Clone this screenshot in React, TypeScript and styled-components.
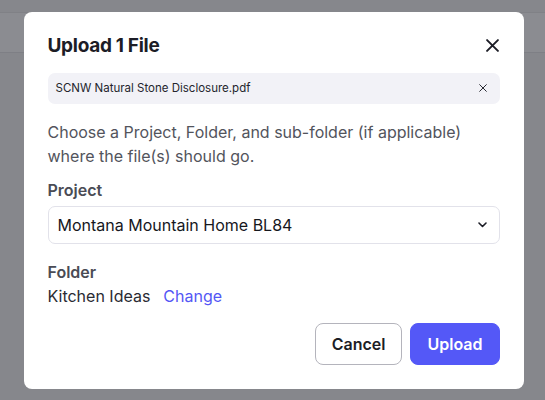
import React from "react";
import styled, { createGlobalStyle } from "styled-components";

const GlobalStyle = createGlobalStyle`
  html, body {
    margin: 0;
    padding: 0;
  }
  body {
    font-family: Inter, "Noto Sans", sans-serif;
    -webkit-font-smoothing: antialiased;
  }
  * { box-sizing: border-box; }
`;

const Page = styled.div`
  position: relative;
  width: 545px;
  height: 400px;
  background: #86878c;
  overflow: hidden;
`;

const HeaderUnder = styled.div`
  margin-top: 12px;
  height: 41px;
  border-top: 1px solid #808186;
  border-bottom: 1px solid #7e7f85;
  background: #8b8c91;
`;

const Overlay = styled.div`
  position: absolute;
  inset: 0;
  display: flex;
  align-items: center;
  justify-content: center;
  padding-left: 2px;
`;

const Dialog = styled.div`
  width: 500px;
  background: #ffffff;
  border-radius: 8px;
  padding: 24px;
  display: flex;
  flex-direction: column;
`;

const TitleRow = styled.div`
  display: flex;
  align-items: center;
  justify-content: space-between;
  height: 20px;
`;

const Title = styled.h2`
  margin: 0;
  font-size: 19px;
  line-height: 20px;
  font-weight: 700;
  letter-spacing: -0.3px;
  color: #1c1d26;
`;

const IconButton = styled.button<{ size: number }>`
  border: none;
  background: none;
  padding: 0;
  width: ${({ size }) => size}px;
  height: ${({ size }) => size}px;
  display: flex;
  align-items: center;
  justify-content: center;
  color: #1c1d26;
  cursor: pointer;
`;

const FileChip = styled.div`
  margin-top: 17px;
  height: 31px;
  background: #f2f2f7;
  border-radius: 7px;
  display: flex;
  align-items: center;
  justify-content: space-between;
  padding: 0 13px 0 8px;
  font-size: 11.5px;
  color: #24252d;
`;

const Description = styled.p`
  margin: 16px 0 0;
  font-size: 16px;
  line-height: 24px;
  color: #52545c;
`;

const Label = styled.div<{ top: number }>`
  margin-top: ${({ top }) => top}px;
  font-size: 16px;
  line-height: 24px;
  font-weight: 600;
  color: #4a4c55;
`;

const Select = styled.div`
  margin-top: 4px;
  height: 38px;
  border: 1px solid #e2e2ea;
  border-radius: 7px;
  display: flex;
  align-items: center;
  justify-content: space-between;
  padding: 0 12px 0 9px;
  font-size: 16px;
  color: #16171d;
`;

const FolderRow = styled.div`
  display: flex;
  align-items: center;
  gap: 13px;
  font-size: 16px;
  line-height: 24px;
  color: #2a2b33;
`;

const Link = styled.a`
  color: #5457f5;
  text-decoration: none;
  cursor: pointer;
`;

const Actions = styled.div`
  margin-top: 15px;
  display: flex;
  justify-content: flex-end;
  gap: 8px;
`;

const Button = styled.button<{ primary?: boolean }>`
  height: 42px;
  padding: 0 16px;
  border-radius: 8px;
  font-family: Inter, "Noto Sans", sans-serif;
  font-size: 16px;
  font-weight: 600;
  cursor: pointer;
  border: 1px solid ${({ primary }) => (primary ? "#5458f7" : "#b4b4bc")};
  background: ${({ primary }) => (primary ? "#5458f7" : "#ffffff")};
  color: ${({ primary }) => (primary ? "#ffffff" : "#1c1d26")};
`;

const Cross = ({ size, stroke }: { size: number; stroke: number }) => (
  <svg width={size} height={size} viewBox="0 0 12 12" fill="none">
    <path d="M1 1L11 11M11 1L1 11" stroke="currentColor" strokeWidth={stroke} strokeLinecap="round" />
  </svg>
);

const Chevron = () => (
  <svg width="9" height="6" viewBox="0 0 9 6" fill="none">
    <path d="M1 1L4.5 4.5L8 1" stroke="#1c1d26" strokeWidth="1.6" strokeLinecap="round" strokeLinejoin="round" />
  </svg>
);

export default function App() {
  return (
    <Page>
      <GlobalStyle />
      <HeaderUnder />
      <Overlay>
        <Dialog>
          <TitleRow>
            <Title>Upload 1 File</Title>
            <IconButton size={14}>
              <Cross size={13} stroke={1.8} />
            </IconButton>
          </TitleRow>
          <FileChip>
            <span>SCNW Natural Stone Disclosure.pdf</span>
            <IconButton size={8}>
              <Cross size={8} stroke={1.4} />
            </IconButton>
          </FileChip>
          <Description>
            Choose a Project, Folder, and sub-folder (if applicable) where the file(s) should go.
          </Description>
          <Label top={10}>Project</Label>
          <Select>
            <span>Montana Mountain Home BL84</span>
            <Chevron />
          </Select>
          <Label top={16}>Folder</Label>
          <FolderRow>
            <span>Kitchen Ideas</span>
            <Link>Change</Link>
          </FolderRow>
          <Actions>
            <Button>Cancel</Button>
            <Button primary>Upload</Button>
          </Actions>
        </Dialog>
      </Overlay>
    </Page>
  );
}
